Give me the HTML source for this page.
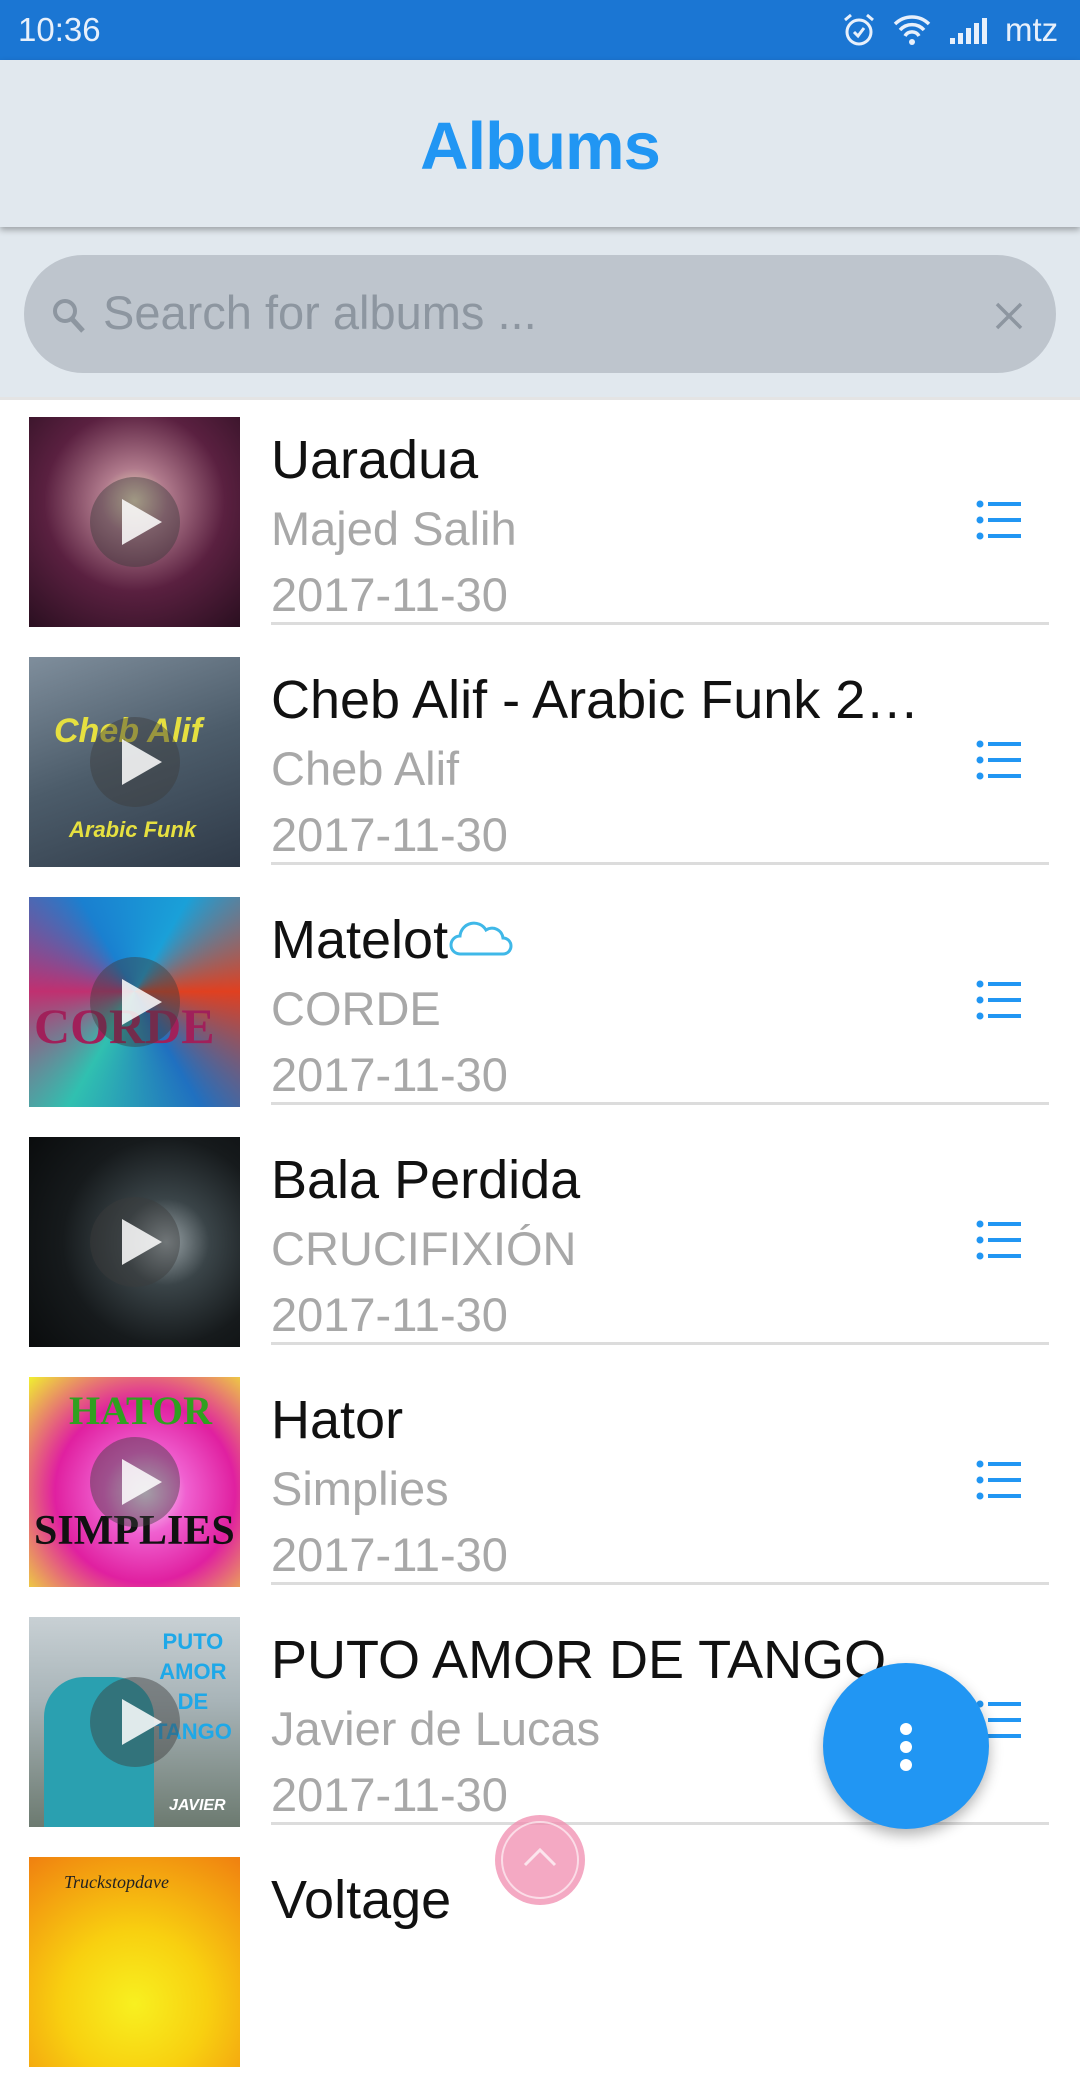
<!DOCTYPE html>
<html><head><meta charset="utf-8"><style>
*{margin:0;padding:0;box-sizing:border-box}
body{width:1080px;height:1920px;overflow:hidden;background:#fff;font-family:"Liberation Sans",sans-serif;position:relative}
.abs{position:absolute}
.status{left:0;top:0;width:1080px;height:60px;background:#1b76d3;color:#e8f0fb;font-size:33px}
.header{left:0;top:60px;width:1080px;height:167px;background:#e1e8ee;box-shadow:0 3px 6px rgba(0,0,0,.3);z-index:2}
.header h1{position:absolute;left:0;width:1080px;text-align:center;top:48px;font-size:67px;color:#2196f3;font-weight:bold;letter-spacing:-1px}
.search{left:0;top:227px;width:1080px;height:173px;background:#e1e8ee;border-bottom:3px solid #e4e4e4}
.pill{left:24px;top:28px;width:1032px;height:118px;border-radius:59px;background:#bec5cd}
.row{left:0;width:1080px;height:240px}
.art{left:29px;top:0;width:211px;height:210px;overflow:hidden}
.play{left:61px;top:60px;width:90px;height:90px;border-radius:50%;background:rgba(60,60,60,.45)}
.play:after{content:"";position:absolute;left:32px;top:22px;border-left:40px solid rgba(255,255,255,.85);border-top:23px solid transparent;border-bottom:23px solid transparent}
.t{left:271px;font-size:54px;color:#111;top:12px;white-space:nowrap}
.s{left:271px;font-size:47px;color:#a8a8a8;top:84px}
.d{left:271px;font-size:47px;color:#a8a8a8;top:150px}
.line{left:271px;top:205px;width:778px;height:3px;background:#dcdcdc}
.menu{left:975px;top:83px}
</style></head><body>
<div class="abs status">
 <div class="abs" style="left:18px;top:11px">10:36</div>
 <svg class="abs" style="left:842px;top:12px" width="34" height="36" viewBox="0 0 34 36"><circle cx="17" cy="20" r="12" fill="none" stroke="#e8f0fb" stroke-width="3"/><path d="M12 20l4 4 6-8M3 8l6-5M31 8l-6-5" stroke="#e8f0fb" stroke-width="3" fill="none"/></svg>
 <svg class="abs" style="left:893px;top:14px" width="38" height="32" viewBox="0 0 38 32"><path d="M2 10a24 24 0 0 1 34 0M7 16a16 16 0 0 1 24 0M12 22a8 8 0 0 1 14 0" stroke="#e8f0fb" stroke-width="3.5" fill="none"/><circle cx="19" cy="28" r="3" fill="#e8f0fb"/></svg>
 <svg class="abs" style="left:950px;top:18px" width="38" height="26" viewBox="0 0 38 26"><rect x="0" y="20" width="5" height="6" fill="#e8f0fb"/><rect x="8" y="15" width="5" height="11" fill="#e8f0fb"/><rect x="16" y="10" width="5" height="16" fill="#e8f0fb"/><rect x="24" y="5" width="5" height="21" fill="#e8f0fb"/><rect x="32" y="0" width="5" height="26" fill="#e8f0fb"/></svg>
 <div class="abs" style="left:1005px;top:11px">mtz</div>
</div>
<div class="abs header"><h1>Albums</h1></div>
<div class="abs search"><div class="abs pill">
 <svg class="abs" style="left:26px;top:40px" width="40" height="44" viewBox="0 0 40 44"><circle cx="15" cy="16" r="10" fill="none" stroke="#8d96a0" stroke-width="4"/><path d="M22 24l11 12" stroke="#8d96a0" stroke-width="5"/></svg>
 <div class="abs" style="left:79px;top:30px;font-size:47px;color:#8d96a0">Search for albums ...</div>
 <svg class="abs" style="left:970px;top:46px" width="30" height="30" viewBox="0 0 30 30"><path d="M3 3l24 24M27 3L3 27" stroke="#8d96a0" stroke-width="3.5"/></svg>
</div></div>

<div class="abs row" style="top:417px">
 <div class="abs art" style="background:radial-gradient(circle at 50% 40%,#f4e6c0 0,#b07a8c 20%,#5a2040 55%,#2a0f20 100%)"><div class="abs play"></div></div>
 <div class="abs t">Uaradua</div><div class="abs s">Majed Salih</div><div class="abs d">2017-11-30</div><div class="abs line"></div>
 <svg class="abs menu" width="48" height="40" viewBox="0 0 48 40"><g fill="#2196f3"><circle cx="5" cy="4" r="3.5"/><circle cx="5" cy="20" r="3.5"/><circle cx="5" cy="36" r="3.5"/><rect x="13" y="2" width="33" height="4"/><rect x="13" y="18" width="33" height="4"/><rect x="13" y="34" width="33" height="4"/></g></svg>
</div>
<div class="abs row" style="top:657px">
 <div class="abs art" style="background:linear-gradient(160deg,#7f8e9c,#4c5c6a 50%,#2f3a48)"><div class="abs" style="left:25px;top:55px;color:#e6e040;font:italic bold 34px 'Liberation Sans'">Cheb Alif</div><div class="abs" style="left:40px;top:160px;color:#e6e040;font:italic bold 22px 'Liberation Sans'">Arabic Funk</div><div class="abs play"></div></div>
 <div class="abs t">Cheb Alif - Arabic Funk 2…</div><div class="abs s">Cheb Alif</div><div class="abs d">2017-11-30</div><div class="abs line"></div>
 <svg class="abs menu" width="48" height="40" viewBox="0 0 48 40"><g fill="#2196f3"><circle cx="5" cy="4" r="3.5"/><circle cx="5" cy="20" r="3.5"/><circle cx="5" cy="36" r="3.5"/><rect x="13" y="2" width="33" height="4"/><rect x="13" y="18" width="33" height="4"/><rect x="13" y="34" width="33" height="4"/></g></svg>
</div>
<div class="abs row" style="top:897px">
 <div class="abs art" style="background:conic-gradient(from 30deg at 50% 45%,#1aa0d8,#e04020,#2070c0,#30c0b0,#c03070,#1a80d0,#1aa0d8)"><div class="abs" style="left:5px;top:100px;color:#a0205a;font:bold 50px 'Liberation Serif'">CORDE</div><div class="abs play"></div></div>
 <div class="abs t">Matelot<svg width="66" height="44" viewBox="0 0 66 44" style="vertical-align:-2px"><path d="M12 38a9 9 0 0 1 0-18 14 14 0 0 1 26-6 11 11 0 0 1 17 8 8 8 0 0 1 0 16z" fill="none" stroke="#3fb8e8" stroke-width="3"/></svg></div><div class="abs s">CORDE</div><div class="abs d">2017-11-30</div><div class="abs line"></div>
 <svg class="abs menu" width="48" height="40" viewBox="0 0 48 40"><g fill="#2196f3"><circle cx="5" cy="4" r="3.5"/><circle cx="5" cy="20" r="3.5"/><circle cx="5" cy="36" r="3.5"/><rect x="13" y="2" width="33" height="4"/><rect x="13" y="18" width="33" height="4"/><rect x="13" y="34" width="33" height="4"/></g></svg>
</div>
<div class="abs row" style="top:1137px">
 <div class="abs art" style="background:radial-gradient(circle at 65% 50%,#9aa4a8 0,#3a4448 25%,#161a1c 60%,#0a0c0d 100%)"><div class="abs play"></div></div>
 <div class="abs t">Bala Perdida</div><div class="abs s">CRUCIFIXIÓN</div><div class="abs d">2017-11-30</div><div class="abs line"></div>
 <svg class="abs menu" width="48" height="40" viewBox="0 0 48 40"><g fill="#2196f3"><circle cx="5" cy="4" r="3.5"/><circle cx="5" cy="20" r="3.5"/><circle cx="5" cy="36" r="3.5"/><rect x="13" y="2" width="33" height="4"/><rect x="13" y="18" width="33" height="4"/><rect x="13" y="34" width="33" height="4"/></g></svg>
</div>
<div class="abs row" style="top:1377px">
 <div class="abs art" style="background:radial-gradient(circle at 55% 55%,#f8f0ff 0,#f060d0 25%,#e020a0 55%,#f0f030 100%)"><div class="abs" style="left:40px;top:10px;color:#30a020;font:bold 40px 'Liberation Serif'">HATOR</div><div class="abs" style="left:5px;top:130px;color:#111;font:bold 42px 'Liberation Serif'">SIMPLIES</div><div class="abs play"></div></div>
 <div class="abs t">Hator</div><div class="abs s">Simplies</div><div class="abs d">2017-11-30</div><div class="abs line"></div>
 <svg class="abs menu" width="48" height="40" viewBox="0 0 48 40"><g fill="#2196f3"><circle cx="5" cy="4" r="3.5"/><circle cx="5" cy="20" r="3.5"/><circle cx="5" cy="36" r="3.5"/><rect x="13" y="2" width="33" height="4"/><rect x="13" y="18" width="33" height="4"/><rect x="13" y="34" width="33" height="4"/></g></svg>
</div>
<div class="abs row" style="top:1617px">
 <div class="abs art" style="background:linear-gradient(180deg,#c8d0d4 0,#a8b4b8 40%,#6c7a70 100%)"><div class="abs" style="left:15px;top:60px;width:110px;height:150px;background:#2aa0b0;border-radius:40px 40px 0 0"></div><div class="abs" style="left:125px;top:10px;color:#1ea8e8;font:bold 22px 'Liberation Sans';line-height:30px;text-align:center">PUTO<br>AMOR<br>DE<br>TANGO</div><div class="abs" style="left:140px;top:180px;color:#fff;font:italic bold 16px 'Liberation Sans'">JAVIER</div><div class="abs play"></div></div>
 <div class="abs t">PUTO AMOR DE TANGO</div><div class="abs s">Javier de Lucas</div><div class="abs d">2017-11-30</div><div class="abs line"></div>
 <svg class="abs menu" width="48" height="40" viewBox="0 0 48 40"><g fill="#2196f3"><circle cx="5" cy="4" r="3.5"/><circle cx="5" cy="20" r="3.5"/><circle cx="5" cy="36" r="3.5"/><rect x="13" y="2" width="33" height="4"/><rect x="13" y="18" width="33" height="4"/><rect x="13" y="34" width="33" height="4"/></g></svg>
</div>
<div class="abs row" style="top:1857px">
 <div class="abs art" style="background:radial-gradient(circle at 50% 70%,#f8f020 0,#f8d010 40%,#f08010 100%)"><div class="abs" style="left:35px;top:15px;color:#222;font:italic 18px 'Liberation Serif'">Truckstopdave</div></div>
 <div class="abs t">Voltage</div>
</div>

<div class="abs" style="left:823px;top:1663px;width:166px;height:166px;border-radius:50%;background:#2196f3;box-shadow:0 6px 14px rgba(0,0,0,.3)">
 <div class="abs" style="left:77px;top:60px;width:12px;height:12px;border-radius:50%;background:#fff"></div>
 <div class="abs" style="left:77px;top:78px;width:12px;height:12px;border-radius:50%;background:#fff"></div>
 <div class="abs" style="left:77px;top:96px;width:12px;height:12px;border-radius:50%;background:#fff"></div>
</div>
<div class="abs" style="left:495px;top:1815px;width:90px;height:90px;border-radius:50%;background:rgba(240,140,175,.75)">
 <div class="abs" style="left:6px;top:6px;width:78px;height:78px;border-radius:50%;border:2px solid rgba(255,255,255,.6)"></div>
 <svg class="abs" style="left:27px;top:30px" width="36" height="24" viewBox="0 0 36 24"><path d="M3 20L18 5l15 15" stroke="rgba(255,255,255,.7)" stroke-width="3" fill="none"/></svg>
</div>
</body></html>
